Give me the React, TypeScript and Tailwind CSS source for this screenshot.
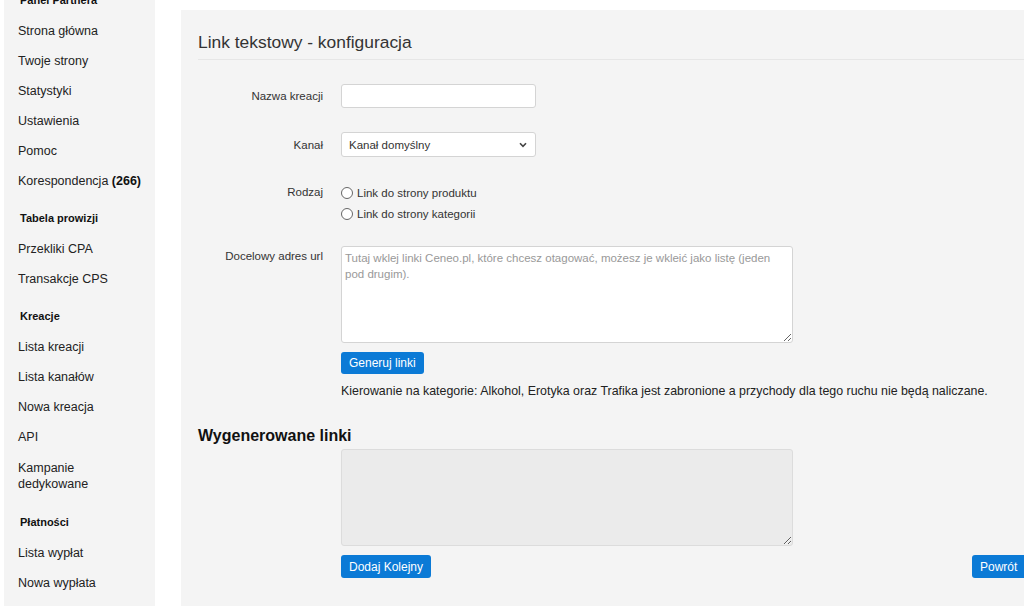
import React from "react";

const font = { fontFamily: '"Liberation Sans", Arial, sans-serif' };

function Item({ children }: { children: React.ReactNode }) {
  return (
    <div className="h-[30px] flex items-center pl-[14px] text-[12.5px] leading-[16px] text-[#222]">
      {children}
    </div>
  );
}

function Heading({ children }: { children: React.ReactNode }) {
  return (
    <div className="h-[38px] pt-[14px] pl-[16px] text-[11px] leading-[16px] font-bold text-[#111]">
      {children}
    </div>
  );
}

export default function App() {
  return (
    <div className="w-[1024px] h-[606px] overflow-hidden bg-white flex" style={font}>
      <div className="pl-[4px] shrink-0">
        <div className="w-[151px] h-[606px] bg-[#f4f4f4] flex flex-col overflow-hidden">
          <div className="-mt-[22px]">
            <Heading>Panel Partnera</Heading>
            <Item>Strona główna</Item>
            <Item>Twoje strony</Item>
            <Item>Statystyki</Item>
            <Item>Ustawienia</Item>
            <Item>Pomoc</Item>
            <Item>
              <span>
                Korespondencja <b className="text-[#111]">(266)</b>
              </span>
            </Item>
            <Heading>Tabela prowizji</Heading>
            <Item>Przekliki CPA</Item>
            <Item>Transakcje CPS</Item>
            <Heading>Kreacje</Heading>
            <Item>Lista kreacji</Item>
            <Item>Lista kanałów</Item>
            <Item>Nowa kreacja</Item>
            <Item>API</Item>
            <div className="py-[8px] pl-[14px] text-[12.5px] leading-[16px] text-[#222]">
              Kampanie
              <br />
              dedykowane
            </div>
            <Heading>Płatności</Heading>
            <Item>Lista wypłat</Item>
            <Item>Nowa wypłata</Item>
          </div>
        </div>
      </div>

      <div className="ml-[26px] mt-[10px] w-[845px] shrink-0 bg-[#f4f4f4] text-[#333]">
        <div className="ml-[17px] pt-[22px] pb-[7px] border-b border-[#e6e6e6]">
          <h1 className="text-[17.4px] leading-[20px] text-[#333]">Link tekstowy - konfiguracja</h1>
        </div>

        <div className="grid grid-cols-[142px_1fr] gap-x-[18px] text-[11.5px] leading-[16px]">
          {/* Nazwa kreacji */}
          <div className="mt-[24px] h-[24px] flex items-center justify-end">Nazwa kreacji</div>
          <div className="mt-[24px]">
            <input
              type="text"
              className="block w-[195px] h-[24px] bg-white border border-[#d4d4d4] rounded-[3px] outline-none"
            />
          </div>

          {/* Kanal */}
          <div className="mt-[24px] h-[25px] flex items-center justify-end">Kanał</div>
          <div className="mt-[24px]">
            <div className="relative w-[195px] h-[25px] bg-white border border-[#d4d4d4] rounded-[3px] flex items-center pl-[7px] text-[#333]">
              Kanał domyślny
              <svg
                className="absolute right-[8px] top-[9px]"
                width="8"
                height="6"
                viewBox="0 0 8 6"
                fill="none"
              >
                <path d="M1 1.2 L4 4.3 L7 1.2" stroke="#444" strokeWidth="1.6" />
              </svg>
            </div>
          </div>

          {/* Rodzaj */}
          <div className="mt-[25px] h-[20px] flex items-center justify-end">Rodzaj</div>
          <div className="mt-[25px]">
            {["Link do strony produktu", "Link do strony kategorii"].map((t) => (
              <label key={t} className="h-[21px] flex items-center gap-[4px]">
                <span className="w-[12px] h-[12px] rounded-full border border-[#666] bg-white shrink-0" />
                <span>{t}</span>
              </label>
            ))}
          </div>

          {/* Docelowy adres url */}
          <div className="mt-[22px] pt-[2px] text-right">Docelowy adres url</div>
          <div className="mt-[22px]">
            <textarea
              className="block w-[452px] h-[97px] bg-white border border-[#d4d4d4] rounded-[3px] px-[3px] py-[3px] text-[11.5px] leading-[16px] outline-none placeholder:text-[#999]"
              style={font}
              placeholder="Tutaj wklej linki Ceneo.pl, które chcesz otagować, możesz je wkleić jako listę (jeden pod drugim)."
            />
            <button className="mt-[9px] h-[22px] px-[8px] bg-[#0b7ad6] text-white rounded-[3px] text-[12px]">
              Generuj linki
            </button>
            <p className="mt-[8px] text-[12.4px] leading-[18px] text-[#222] whitespace-nowrap">
              Kierowanie na kategorie: Alkohol, Erotyka oraz Trafika jest zabronione a przychody dla tego ruchu nie będą naliczane.
            </p>
          </div>
        </div>

        <h2 className="ml-[17px] mt-[26px] text-[16px] leading-[20px] font-bold text-[#111]">
          Wygenerowane linki
        </h2>

        <div className="grid grid-cols-[142px_1fr] gap-x-[18px] text-[12px]">
          <div />
          <div className="mt-[3px]">
            <textarea
              readOnly
              className="block w-[452px] h-[97px] bg-[#ebebeb] border border-[#dcdcdc] rounded-[3px] outline-none"
            />
            <div className="mt-[9px] flex items-center justify-between">
              <button className="h-[23px] px-[8px] bg-[#0b7ad6] text-white rounded-[3px] text-[12px]">
                Dodaj Kolejny
              </button>
              <button className="h-[23px] w-[56px] px-[8px] -mr-[2px] bg-[#0b7ad6] text-white rounded-[3px] text-[12px] text-left">
                Powrót
              </button>
            </div>
          </div>
        </div>
      </div>
    </div>
  );
}
